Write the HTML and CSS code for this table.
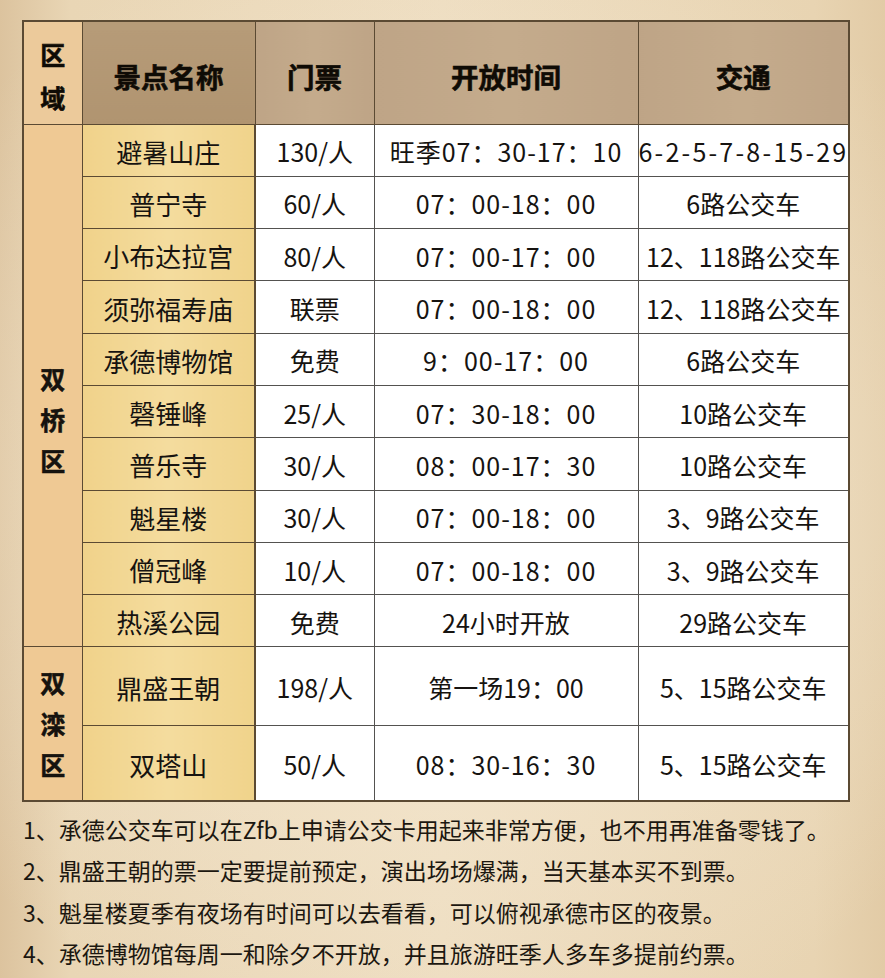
FILE: index.html
```html
<!DOCTYPE html>
<html lang="zh-CN">
<head>
<meta charset="utf-8">
<title>承德景点</title>
<link rel="stylesheet" href="styles.css">
</head>
<body>
<div class="page">
  <table class="guide">
    <colgroup>
      <col class="c-region"><col class="c-name"><col class="c-ticket"><col class="c-time"><col class="c-bus">
    </colgroup>
    <thead>
      <tr class="head">
        <th class="h-region"><span class="stack"><span>区</span><span>域</span></span></th>
        <th class="h-name">景点名称</th>
        <th class="h-other">门票</th>
        <th class="h-other">开放时间</th>
        <th class="h-other">交通</th>
      </tr>
    </thead>
    <tbody>
      <tr class="r">
        <td class="region r1" rowspan="10"><span class="stack low"><span>双</span><span>桥</span><span>区</span></span></td>
        <td class="name">避暑山庄</td><td class="d">130/人</td><td class="d t">旺季07：30-17：10</td><td class="d wide">6-2-5-7-8-15-29</td>
      </tr>
      <tr class="r"><td class="name">普宁寺</td><td class="d">60/人</td><td class="d t">07：00-18：00</td><td class="d">6路公交车</td></tr>
      <tr class="r"><td class="name">小布达拉宫</td><td class="d">80/人</td><td class="d t">07：00-17：00</td><td class="d">12、118路公交车</td></tr>
      <tr class="r"><td class="name">须弥福寿庙</td><td class="d">联票</td><td class="d t">07：00-18：00</td><td class="d">12、118路公交车</td></tr>
      <tr class="r"><td class="name">承德博物馆</td><td class="d">免费</td><td class="d t">9：00-17：00</td><td class="d">6路公交车</td></tr>
      <tr class="r"><td class="name">磬锤峰</td><td class="d">25/人</td><td class="d t">07：30-18：00</td><td class="d">10路公交车</td></tr>
      <tr class="r"><td class="name">普乐寺</td><td class="d">30/人</td><td class="d t">08：00-17：30</td><td class="d">10路公交车</td></tr>
      <tr class="r"><td class="name">魁星楼</td><td class="d">30/人</td><td class="d t">07：00-18：00</td><td class="d">3、9路公交车</td></tr>
      <tr class="r"><td class="name">僧冠峰</td><td class="d">10/人</td><td class="d t">07：00-18：00</td><td class="d">3、9路公交车</td></tr>
      <tr class="r"><td class="name">热溪公园</td><td class="d">免费</td><td class="d">24小时开放</td><td class="d">29路公交车</td></tr>
      <tr class="r-tall1">
        <td class="region" rowspan="2"><span class="stack"><span>双</span><span>滦</span><span>区</span></span></td>
        <td class="name">鼎盛王朝</td><td class="d">198/人</td><td class="d">第一场19：00</td><td class="d">5、15路公交车</td>
      </tr>
      <tr class="r-tall2"><td class="name">双塔山</td><td class="d">50/人</td><td class="d t">08：30-16：30</td><td class="d">5、15路公交车</td></tr>
    </tbody>
  </table>
  <ol class="notes">
    <li>1、承德公交车可以在Zfb上申请公交卡用起来非常方便，也不用再准备零钱了。</li>
    <li>2、鼎盛王朝的票一定要提前预定，演出场场爆满，当天基本买不到票。</li>
    <li>3、魁星楼夏季有夜场有时间可以去看看，可以俯视承德市区的夜景。</li>
    <li>4、承德博物馆每周一和除夕不开放，并且旅游旺季人多车多提前约票。</li>
  </ol>
</div>
</body>
</html>
```

FILE: styles.css
```css
html, body {
  margin: 0;
  padding: 0;
}
body {
  width: 885px;
  height: 978px;
  overflow: hidden;
  font-family: "Noto Sans CJK SC", "Noto Sans", sans-serif;
  color: #161310;
  background:
    radial-gradient(ellipse 70% 60% at 50% 50%, rgba(246, 234, 212, 0.9) 0%, rgba(246, 234, 212, 0) 100%),
    linear-gradient(90deg, #dcc39e 0%, #e9d6b5 8%, #eddcbf 50%, #e8d4b2 92%, #e2cba6 100%);
}
.page {
  padding: 20px 0 0 22px;
}
.guide {
  width: 826px;
  border-collapse: collapse;
  table-layout: fixed;
  border: 2px solid #5b4a33;
}
.c-region { width: 59px; }
.c-name { width: 173px; }
.c-ticket { width: 119px; }
.c-time { width: 264px; }
.c-bus { width: 211px; }

th, td {
  padding: 0;
  text-align: center;
  vertical-align: middle;
  white-space: nowrap;
  overflow: visible;
}
.head { height: 103px; }
th {
  font-weight: 700;
  font-size: 27.5px;
  color: #0f0b05;
  border: 1.5px solid #5b4a33;
  padding-top: 6px;
  -webkit-text-stroke: 0.6px #0f0b05;
}
.h-region {
  background: #ecca9b;
  font-size: 25px;
}
.h-name {
  background: linear-gradient(180deg, #b69b78 0%, #b09470 100%);
}
.h-other {
  background: linear-gradient(90deg, #bea486 0%, #c4ab8c 50%, #bea486 100%);
}
.stack {
  display: inline-flex;
  flex-direction: column;
  line-height: 41px;
}
.h-region .stack { line-height: 43px; }
.region {
  background: #efc994;
  font-weight: 700;
  font-size: 25px;
  border: 1.5px solid #5b4a33;
  -webkit-text-stroke: 0.5px #0f0b05;
}
.region.r1 { padding-top: 68px; }
.r { height: 52.3px; }
.r-tall1 { height: 79px; }
.r-tall2 { height: 75px; }
.name {
  background: linear-gradient(90deg, #f0d28a 0%, #f4dc9e 50%, #f0d38b 100%);
  font-size: 26px;
  border: 1.5px solid #5b4a33;
  border-right-width: 2px;
  padding-top: 2px;
}
.d {
  background: #ffffff;
  font-size: 25px;
  border: 1.5px solid #545250;
  padding-top: 2px;
}
.d.t {
  letter-spacing: 1px;
}
.d.wide {
  letter-spacing: 2.2px;
}
.notes {
  list-style: none;
  margin: 7px 0 0 1px;
  padding: 0;
  font-size: 23px;
  line-height: 41.5px;
  color: #1c1710;
}
.notes li {
  margin: 0;
}
```
